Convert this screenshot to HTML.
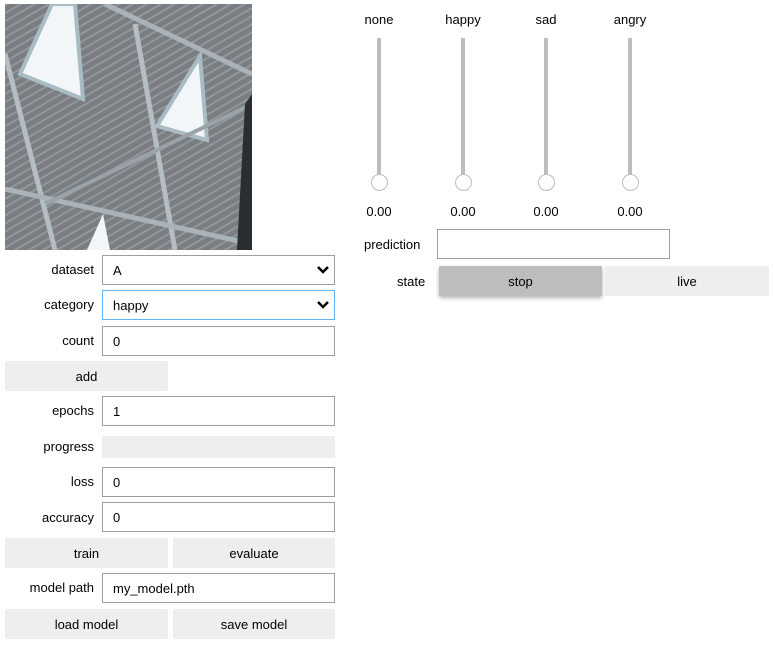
<!DOCTYPE html>
<html><head><style>
body{margin:0;width:774px;height:646px;background:#fff;font-family:"Liberation Sans",sans-serif;font-size:13px;color:#000;position:relative;overflow:hidden}
.a{position:absolute}
.lbl{position:absolute;text-align:right;width:90px;left:4px;line-height:30px;top:0;color:#000}
.box{position:absolute;box-sizing:border-box;border:1px solid #9e9e9e;background:#fff;padding-left:10px;line-height:29px}
.btn{position:absolute;background:#eee;text-align:center;line-height:31px;height:30px;border-radius:1px}
.trk{position:absolute;width:4px;background:#bdbdbd;top:38px;height:140px}
.th{position:absolute;width:17px;height:17px;border:1px solid #bdbdbd;border-radius:50%;background:#fff;top:174px;box-sizing:border-box}
.ct{position:absolute;text-align:center;width:60px}
</style></head><body>
<svg class="a" style="left:5px;top:4px" width="247" height="246" viewBox="0 0 247 246">
<defs><pattern id="p" width="7" height="7" patternUnits="userSpaceOnUse" patternTransform="rotate(60)"><rect width="7" height="7" fill="#7a7e82"/><rect width="2" height="7" fill="#92979b"/></pattern></defs>
<rect width="247" height="246" fill="url(#p)"/>
<polygon points="47,0 70,0 78,95 15,70" fill="#f2f6f8" stroke="#a9bcc4" stroke-width="4"/>
<polygon points="195,52 202,136 152,122" fill="#f2f6f8" stroke="#a9bcc4" stroke-width="4"/>
<polygon points="98,210 105,246 82,246" fill="#f2f6f8"/>
<line x1="0" y1="50" x2="50" y2="246" stroke="#b5bec2" stroke-width="5"/>
<line x1="130" y1="20" x2="170" y2="246" stroke="#b5bec2" stroke-width="5"/>
<line x1="0" y1="185" x2="247" y2="240" stroke="#aab3b7" stroke-width="5"/>
<line x1="100" y1="0" x2="247" y2="70" stroke="#aab3b7" stroke-width="5"/>
<line x1="40" y1="200" x2="247" y2="100" stroke="#9aa3a7" stroke-width="4"/>
<polygon points="240,100 247,90 247,246 232,246" fill="#2a2e33"/>
</svg>

<div class="lbl" style="top:255px">dataset</div>
<div class="box" style="left:102px;top:255px;width:233px;height:30px">A</div>
<div class="lbl" style="top:290px">category</div>
<div class="box" style="left:102px;top:290px;width:233px;height:30px;border-color:#64b5f6">happy</div>
<div class="lbl" style="top:326px">count</div>
<div class="box" style="left:102px;top:326px;width:233px;height:30px">0</div>
<div class="btn" style="left:5px;top:361px;width:163px">add</div>
<div class="lbl" style="top:396px">epochs</div>
<div class="box" style="left:102px;top:396px;width:233px;height:30px">1</div>
<div class="lbl" style="top:432px">progress</div>
<div class="a" style="left:102px;top:436px;width:233px;height:22px;background:#eee"></div>
<div class="lbl" style="top:467px">loss</div>
<div class="box" style="left:102px;top:467px;width:233px;height:30px">0</div>
<div class="lbl" style="top:503px">accuracy</div>
<div class="box" style="left:102px;top:502px;width:233px;height:30px">0</div>
<div class="btn" style="left:5px;top:538px;width:163px">train</div>
<div class="btn" style="left:173px;top:538px;width:162px">evaluate</div>
<div class="lbl" style="top:573px">model path</div>
<div class="box" style="left:102px;top:573px;width:233px;height:30px">my_model.pth</div>
<div class="btn" style="left:5px;top:609px;width:163px">load model</div>
<div class="btn" style="left:173px;top:609px;width:162px">save model</div>

<svg class="a" style="left:316px;top:264px" width="14" height="12" viewBox="0 0 14 12"><path d="M2 3 L7 8 L12 3" fill="none" stroke="#000" stroke-width="2.5"/></svg>
<svg class="a" style="left:316px;top:299px" width="14" height="12" viewBox="0 0 14 12"><path d="M2 3 L7 8 L12 3" fill="none" stroke="#000" stroke-width="2.5"/></svg>

<div class="ct" style="left:349px;top:12px">none</div>
<div class="ct" style="left:433px;top:12px">happy</div>
<div class="ct" style="left:516px;top:12px">sad</div>
<div class="ct" style="left:600px;top:12px">angry</div>
<div class="trk" style="left:377px"></div><div class="th" style="left:371px"></div>
<div class="trk" style="left:461px"></div><div class="th" style="left:455px"></div>
<div class="trk" style="left:544px"></div><div class="th" style="left:538px"></div>
<div class="trk" style="left:628px"></div><div class="th" style="left:622px"></div>
<div class="ct" style="left:349px;top:204px">0.00</div>
<div class="ct" style="left:433px;top:204px">0.00</div>
<div class="ct" style="left:516px;top:204px">0.00</div>
<div class="ct" style="left:600px;top:204px">0.00</div>
<div class="a" style="left:364px;top:230px;line-height:30px">prediction</div>
<div class="box" style="left:437px;top:229px;width:233px;height:30px"></div>
<div class="a" style="left:397px;top:267px;line-height:30px">state</div>
<div class="btn" style="left:439px;top:266px;width:163px;background:#bdbdbd;box-shadow:0 2px 4px rgba(0,0,0,.3)">stop</div>
<div class="btn" style="left:605px;top:266px;width:164px">live</div>
</body></html>
